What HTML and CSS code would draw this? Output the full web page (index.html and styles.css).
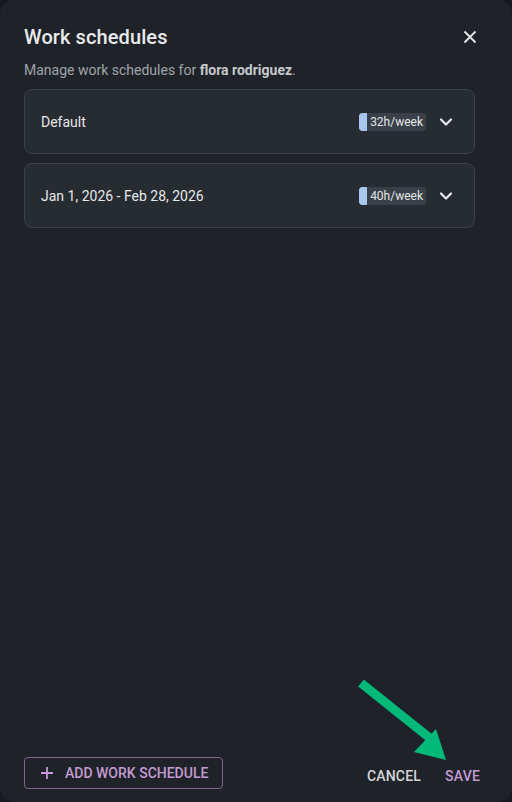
FILE: index.html
```html
<!DOCTYPE html>
<html lang="en">
<head>
<meta charset="utf-8">
<title>Work schedules</title>
<link rel="stylesheet" href="styles.css">
</head>
<body>
<div class="dialog">
  <div class="header">
    <h1 class="title">Work schedules</h1>
    <button class="close" aria-label="Close">
      <svg width="24" height="24" viewBox="0 0 24 24"><path d="M6.5 6.5l11 11M17.5 6.5l-11 11" stroke="#e8e8ea" stroke-width="1.8" fill="none"/></svg>
    </button>
  </div>
  <p class="subtitle">Manage work schedules for <strong>flora rodriguez</strong>.</p>
  <div class="list">
    <div class="card">
      <span class="card-label">Default</span>
      <span class="chip"><span class="chip-bar"></span><span class="chip-text">32h/week</span></span>
      <span class="chev"><svg width="24" height="24" viewBox="0 0 24 24"><path d="M7 9.5l5 5 5-5" stroke="#e8e8ea" stroke-width="2.2" fill="none" stroke-linecap="round" stroke-linejoin="round"/></svg></span>
    </div>
    <div class="card">
      <span class="card-label">Jan 1, 2026 - Feb 28, 2026</span>
      <span class="chip"><span class="chip-bar"></span><span class="chip-text">40h/week</span></span>
      <span class="chev"><svg width="24" height="24" viewBox="0 0 24 24"><path d="M7 9.5l5 5 5-5" stroke="#e8e8ea" stroke-width="2.2" fill="none" stroke-linecap="round" stroke-linejoin="round"/></svg></span>
    </div>
  </div>
  <div class="actions">
    <button class="btn-outline">
      <svg width="14" height="14" viewBox="0 0 14 14"><path d="M7 1v12M1 7h12" stroke="#c49bd2" stroke-width="1.8" fill="none"/></svg>
      <span>Add work schedule</span>
    </button>
    <div class="spacer"></div>
    <button class="btn-text cancel">Cancel</button>
    <button class="btn-text save">Save</button>
  </div>
  <svg class="pointer" width="100" height="90" viewBox="350 675 100 90">
    <path d="M361 683 L431 739" stroke="#03b97a" stroke-width="9" stroke-linecap="butt" fill="none"/>
    <polygon points="446,760 414,752 436,729" fill="#03b97a"/>
  </svg>
</div>
</body>
</html>
```
FILE: styles.css
```css
* { box-sizing: border-box; }
html, body {
  margin: 0;
  padding: 0;
  background: #16191d;
}
body {
  font-family: Roboto, "Noto Sans", Arial, sans-serif;
  color: #e8e8ea;
}
button {
  font-family: inherit;
  background: none;
  border: none;
  cursor: pointer;
  padding: 0;
}
.dialog {
  position: relative;
  width: 512px;
  height: 802px;
  background: #1f2329;
  border-radius: 14px;
  padding: 21px 24px 8px 24px;
  display: flex;
  flex-direction: column;
}
.header {
  display: flex;
  align-items: center;
  justify-content: space-between;
}
.title {
  margin: 0;
  font-size: 20px;
  line-height: 32px;
  font-weight: 500;
  color: #e9eaec;
  letter-spacing: 0.1px;
}
.close {
  width: 24px;
  height: 24px;
  margin-right: 6px;
  display: flex;
}
.subtitle {
  margin: 7px 0 9px 0;
  font-size: 14px;
  line-height: 20px;
  color: #a0a4aa;
}
.subtitle strong {
  font-weight: 700;
  color: #c5c8cc;
}
.list {
  display: flex;
  flex-direction: column;
  gap: 9px;
  margin-right: 13px;
}
.card {
  height: 65px;
  background: #272b32;
  border: 1px solid #3c4149;
  border-radius: 8px;
  display: flex;
  align-items: center;
  padding: 0 16px 0 16px;
}
.card-label {
  flex: 1;
  font-size: 14px;
  color: #e6e7e9;
}
.chip {
  display: flex;
  align-items: stretch;
  height: 18px;
  background: #394049;
  border-radius: 3px;
  overflow: hidden;
}
.chip-bar {
  width: 8px;
  background: #a8c8f0;
  border-radius: 3px 0 0 3px;
}
.chip-text {
  font-size: 12px;
  line-height: 18px;
  color: #e4e6e8;
  padding: 0 3px 0 3px;
}
.chev {
  width: 24px;
  height: 24px;
  margin-left: 8px;
  display: flex;
}
.actions {
  margin-top: auto;
  display: flex;
  align-items: flex-end;
}
.spacer { flex: 1; }
.btn-outline {
  height: 32px;
  margin-bottom: 5px;
  border: 1px solid #7e6788;
  border-radius: 4px;
  padding: 0 14px 0 15px;
  display: flex;
  align-items: center;
  gap: 11px;
  color: #c49bd2;
  font-size: 14px;
  font-weight: 500;
  text-transform: uppercase;
  letter-spacing: 0;
}
.btn-text {
  height: 36px;
  padding: 0 8px;
  font-size: 14px;
  font-weight: 500;
  text-transform: uppercase;
  letter-spacing: 0.2px;
  line-height: 36px;
}
.cancel {
  color: #d3d5d8;
  margin-right: 8px;
}
.save {
  color: #c49bd2;
}
.pointer {
  position: absolute;
  left: 350px;
  top: 675px;
}
```
